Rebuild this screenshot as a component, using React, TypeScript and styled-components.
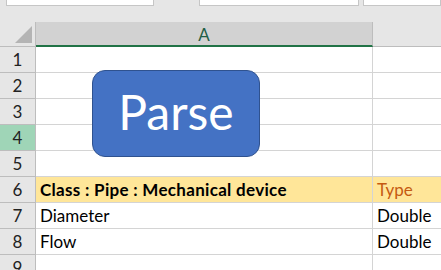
import * as React from 'react';
import styled, { createGlobalStyle } from 'styled-components';

const GlobalStyle = createGlobalStyle`
    html, body {
        margin: 0;
        padding: 0;
        background: #e6e6e6;
        overflow: hidden;
    }
    body {
        font-family: Lato, "Open Sans", sans-serif;
    }
`;

const rows = [
    { n: 1, a: '', b: '' },
    { n: 2, a: '', b: '' },
    { n: 3, a: '', b: '' },
    { n: 4, a: '', b: '', selected: true },
    { n: 5, a: '', b: '' },
    { n: 6, a: 'Class : Pipe : Mechanical device', b: 'Type', head: true },
    { n: 7, a: 'Diameter', b: 'Double' },
    { n: 8, a: 'Flow', b: 'Double' },
    { n: 9, a: '', b: '' },
];

const Page = styled.div`
    width: 441px;
    height: 270px;
    overflow: hidden;
    background: #e6e6e6;
`;

const FormulaBar = styled.div`
    height: 22px;
    display: flex;
    align-items: flex-start;
`;

const InputBox = styled.div<{ $left: number; $width: number }>`
    margin-left: ${(p) => p.$left}px;
    width: ${(p) => p.$width}px;
    height: 6px;
    background: #ffffff;
    border: 1px solid #c6c6c6;
    border-top: none;
    box-sizing: border-box;
`;

const Sheet = styled.div`
    position: relative;
    display: grid;
    grid-template-columns: 36px 337px 1fr;
    grid-template-rows: 25px repeat(9, 26px);
`;

const Corner = styled.div`
    position: relative;
    border-bottom: 1px solid #bdbdbd;
    border-right: 1px solid #bdbdbd;
    svg {
        position: absolute;
        left: 15px;
        top: 4px;
    }
`;

const ColHeader = styled.div<{ $selected?: boolean }>`
    display: flex;
    align-items: center;
    justify-content: center;
    background: ${(p) => (p.$selected ? '#d2d2d2' : 'transparent')};
    border-bottom: ${(p) => (p.$selected ? '2px solid #217346' : '1px solid #bdbdbd')};
    border-right: ${(p) => (p.$selected ? '1px solid #bdbdbd' : 'none')};
    color: #1f5e45;
    font-size: 17px;
    padding-top: 2px;
    box-sizing: border-box;
`;

const RowHeader = styled.div<{ $selected?: boolean }>`
    display: flex;
    align-items: flex-end;
    justify-content: center;
    padding-bottom: 2px;
    box-sizing: border-box;
    background: ${(p) => (p.$selected ? '#9fd5b7' : '#e6e6e6')};
    border-bottom: 1px solid #bdbdbd;
    border-right: 1px solid #bdbdbd;
    color: #222;
    font-size: 17px;
    line-height: 20px;
`;

const Cell = styled.div<{ $head?: boolean; $accent?: boolean; $last?: boolean }>`
    display: flex;
    align-items: flex-end;
    padding: 0 0 2px 4px;
    box-sizing: border-box;
    background: ${(p) => (p.$head ? '#ffe699' : '#ffffff')};
    border-bottom: 1px solid #d4d4d4;
    border-right: ${(p) => (p.$last ? 'none' : '1px solid #d4d4d4')};
    color: ${(p) => (p.$accent ? '#c55a11' : '#000')};
    font-weight: ${(p) => (p.$head && !p.$accent ? 700 : 400)};
    letter-spacing: ${(p) => (p.$head && !p.$accent ? '0.3px' : 'normal')};
    font-size: 17px;
    line-height: 20px;
    white-space: nowrap;
    overflow: hidden;
`;

const ParseButton = styled.div`
    position: absolute;
    left: 92px;
    top: 48px;
    width: 168px;
    height: 87px;
    box-sizing: border-box;
    background: #4472c4;
    border: 1.5px solid #2f528f;
    border-radius: 13px;
    display: flex;
    align-items: center;
    justify-content: center;
    color: #ffffff;
    font-size: 48px;
    line-height: 1;
    padding-bottom: 3px;
`;

const App: React.FC = () => {
    return (
        <Page>
            <GlobalStyle />
            <FormulaBar>
                <InputBox $left={6} $width={152} />
                <InputBox $left={45} $width={164} />
                <InputBox $left={4} $width={80} />
            </FormulaBar>
            <Sheet>
                <Corner>
                    <svg width="18" height="17" viewBox="0 0 18 17">
                        <polygon points="17,0 17,17 0,17" fill="#b4b4b4" />
                    </svg>
                </Corner>
                <ColHeader $selected>A</ColHeader>
                <ColHeader />
                {rows.map((r) => (
                    <React.Fragment key={r.n}>
                        <RowHeader $selected={r.selected}>{r.n}</RowHeader>
                        <Cell $head={r.head}>{r.a}</Cell>
                        <Cell $head={r.head} $accent={r.head} $last>{r.b}</Cell>
                    </React.Fragment>
                ))}
                <ParseButton>Parse</ParseButton>
            </Sheet>
        </Page>
    );
};

export default App;
